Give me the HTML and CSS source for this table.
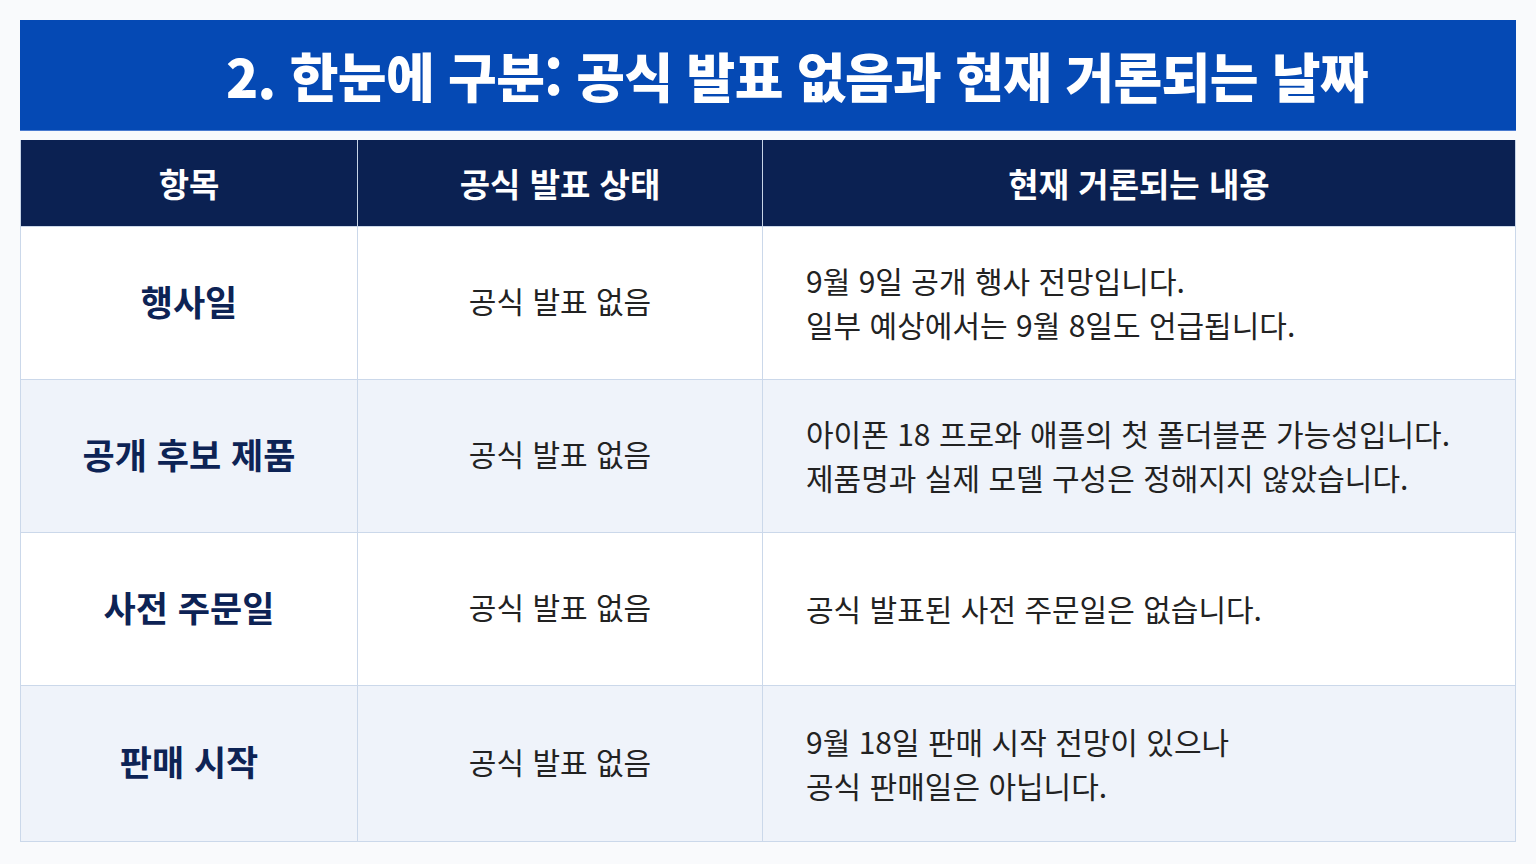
FILE: index.html
```html
<!DOCTYPE html>
<html lang="ko">
<head>
<meta charset="utf-8">
<link rel="stylesheet" href="styles.css">
</head>
<body>
<div class="page">
  <h1 class="title">2. 한눈에 구분: 공식 발표 없음과 현재 거론되는 날짜</h1>
  <table class="grid">
    <thead>
      <tr>
        <th class="c1">항목</th>
        <th class="c2">공식 발표 상태</th>
        <th class="c3">현재 거론되는 내용</th>
      </tr>
    </thead>
    <tbody>
      <tr>
        <td class="item">행사일</td>
        <td class="status">공식 발표 없음</td>
        <td class="desc">9월 9일 공개 행사 전망입니다.<br>일부 예상에서는 9월 8일도 언급됩니다.</td>
      </tr>
      <tr class="alt">
        <td class="item">공개 후보 제품</td>
        <td class="status">공식 발표 없음</td>
        <td class="desc">아이폰 18 프로와 애플의 첫 폴더블폰 가능성입니다.<br>제품명과 실제 모델 구성은 정해지지 않았습니다.</td>
      </tr>
      <tr>
        <td class="item">사전 주문일</td>
        <td class="status">공식 발표 없음</td>
        <td class="desc">공식 발표된 사전 주문일은 없습니다.</td>
      </tr>
      <tr class="alt last">
        <td class="item">판매 시작</td>
        <td class="status">공식 발표 없음</td>
        <td class="desc">9월 18일 판매 시작 전망이 있으나<br>공식 판매일은 아닙니다.</td>
      </tr>
    </tbody>
  </table>
</div>
</body>
</html>
```

FILE: styles.css
```css
html, body {
  margin: 0;
  padding: 0;
  background: #f9fafc;
}
body {
  font-family: "Noto Sans CJK KR", "Noto Sans", sans-serif;
}
.page {
  padding: 20px 20px 0 20px;
}
.title {
  margin: 0;
  height: 111px;
  padding-left: 58px;
  background: #0549b4;
  color: #ffffff;
  font-size: 53px;
  font-weight: 900;
  letter-spacing: -0.7px;
  display: flex;
  align-items: center;
  justify-content: center;
  border-bottom: 1px solid #4a7bd0;
  box-sizing: border-box;
}
.grid {
  margin-top: 9px;
  width: 1496px;
  border-collapse: collapse;
  table-layout: fixed;
}
.grid th {
  background: #0b2152;
  color: #ffffff;
  font-size: 33px;
  font-weight: 700;
  height: 86px;
  padding: 0;
  border-left: 1px solid #c7d4e6;
  border-right: 1px solid #c7d4e6;
}
.grid th.c1 { width: 336px; }
.grid th.c2 { width: 404px; }
.grid td {
  height: 146px;
  padding: 0 0 6px 0;
  border: 1px solid #cbd8ea;
  background: #ffffff;
}
.grid tr.alt td {
  background: #eff3fa;
}
.grid tr.last td {
  height: 149px;
}
.item {
  text-align: center;
  color: #0d2355;
  font-size: 35px;
  font-weight: 700;
}
.status {
  text-align: center;
  color: #222222;
  font-size: 30px;
  font-weight: 400;
}
.grid td.desc {
  text-align: left;
  padding: 0 0 2px 43px;
  height: 150px;
  color: #222222;
  font-size: 30px;
  line-height: 44px;
  font-weight: 400;
}
.grid tr.last td.desc {
  height: 153px;
}
```
